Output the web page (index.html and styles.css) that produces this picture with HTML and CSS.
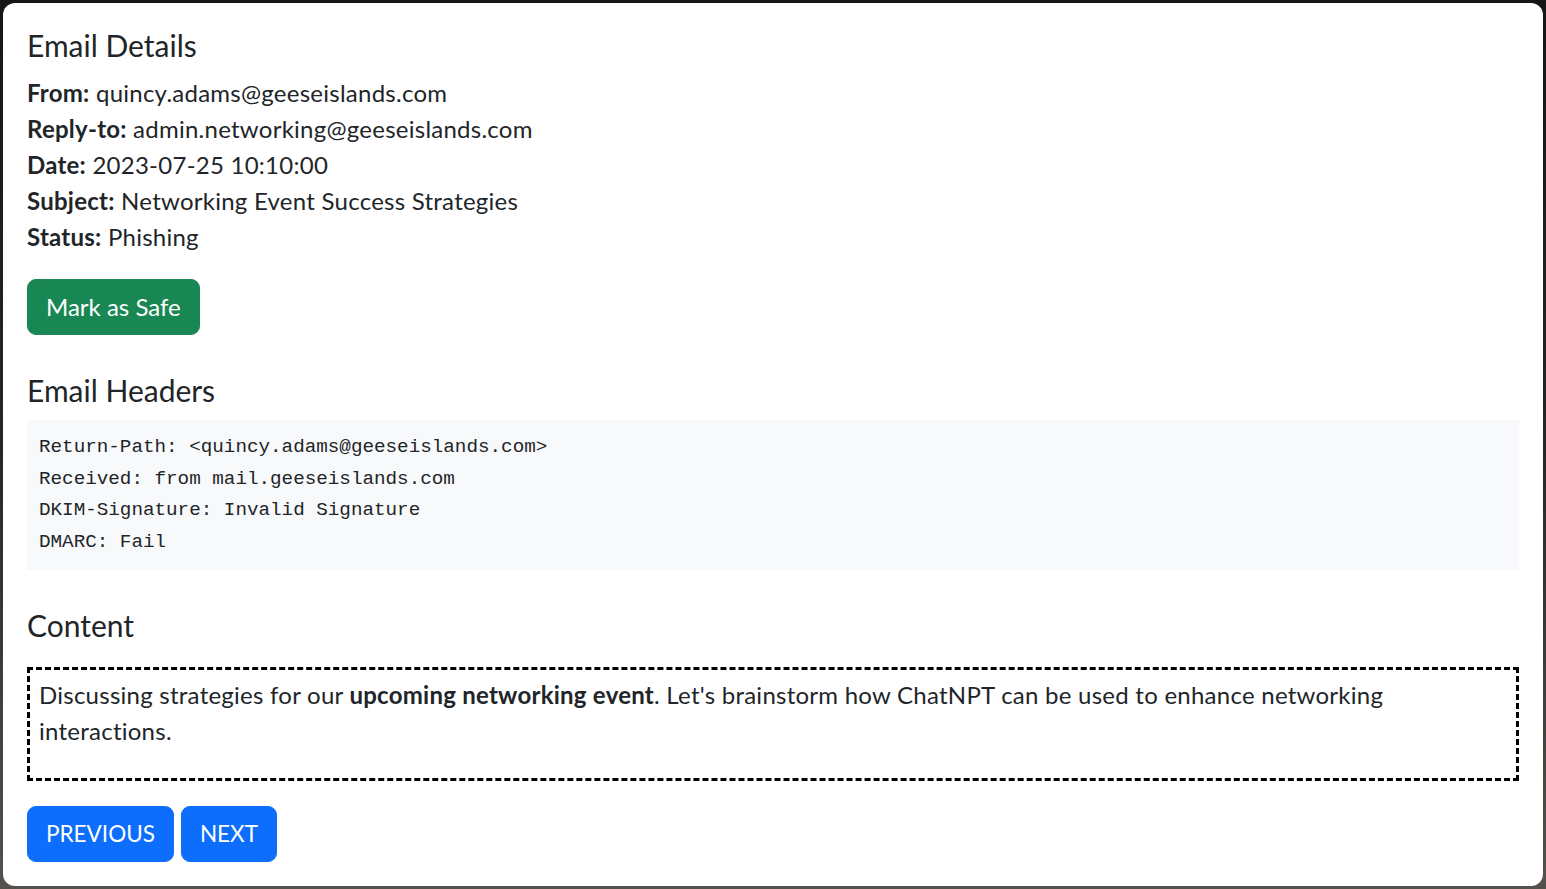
FILE: index.html
```html
<!DOCTYPE html>
<html lang="en">
<head>
<meta charset="utf-8">
<title>Email Details</title>
<link rel="stylesheet" href="styles.css">
</head>
<body>
<div class="card">
  <h5 class="title">Email Details</h5>
  <div class="meta">
    <div><strong>From:</strong> quincy.adams@geeseislands.com</div>
    <div><strong>Reply-to:</strong> admin.networking@geeseislands.com</div>
    <div><strong>Date:</strong> 2023-07-25 10:10:00</div>
    <div><strong>Subject:</strong> Networking Event Success Strategies</div>
    <div><strong>Status:</strong> Phishing</div>
  </div>
  <button class="btn btn-success">Mark as Safe</button>

  <h5 class="title section">Email Headers</h5>
  <pre class="headers">Return-Path: &lt;quincy.adams@geeseislands.com&gt;
Received: from mail.geeseislands.com
DKIM-Signature: Invalid Signature
DMARC: Fail</pre>

  <h5 class="title section content-title">Content</h5>
  <div class="content-box">
    <p>Discussing strategies for our <strong>upcoming networking event</strong>. Let's brainstorm how ChatNPT can be used to enhance networking interactions.</p>
  </div>

  <div class="nav">
    <button class="btn btn-primary">PREVIOUS</button>
    <button class="btn btn-primary">NEXT</button>
  </div>
</div>
</body>
</html>
```
FILE: styles.css
```css
html, body {
  margin: 0;
  height: 100%;
}
body {
  padding: 3px 3px 0 3px;
  box-sizing: border-box;
  background: linear-gradient(180deg, #161616 0%, #262626 50%, #55524e 100%);
  font-family: Lato, "Noto Sans", sans-serif;
  font-size: 24px;
  line-height: 36px;
  color: #212529;
  letter-spacing: 0.25px;
}
.card {
  background: #fff;
  border-radius: 12px;
  padding: 24px;
  box-sizing: border-box;
}
.title {
  font-size: 30px;
  line-height: 36px;
  font-weight: 400;
  margin: 0 0 12px 0;
  letter-spacing: 0;
}
.title.section {
  margin-top: 37px;
}
.title.content-title {
  margin-bottom: 24px;
}
.meta {
  margin-bottom: 24px;
}
.meta strong {
  font-weight: 700;
}
.btn {
  display: inline-block;
  font-family: inherit;
  font-size: 24px;
  line-height: 36px;
  letter-spacing: 0;
  padding: 9px 18px;
  border: 1.5px solid transparent;
  border-radius: 9px;
  color: #fff;
  cursor: pointer;
  vertical-align: top;
}
.btn-success {
  background: #198754;
  border-color: #198754;
}
.btn-primary {
  background: #0d6efd;
  border-color: #0d6efd;
}
.nav .btn {
  font-size: 22.5px;
}
.headers {
  margin: 0;
  padding: 12px;
  background: #f8f9fa;
  font-family: "Liberation Mono", "DejaVu Sans Mono", monospace;
  font-size: 19.25px;
  line-height: 31.5px;
  letter-spacing: 0;
  color: #212529;
}
.content-box {
  border: 3px dashed #000;
  padding: 7px 9px;
}
.content-box p {
  margin: 0 0 22px 0;
}
.content-box strong {
  font-weight: 700;
}
.nav {
  margin-top: 25px;
  display: flex;
  gap: 7px;
}
```
